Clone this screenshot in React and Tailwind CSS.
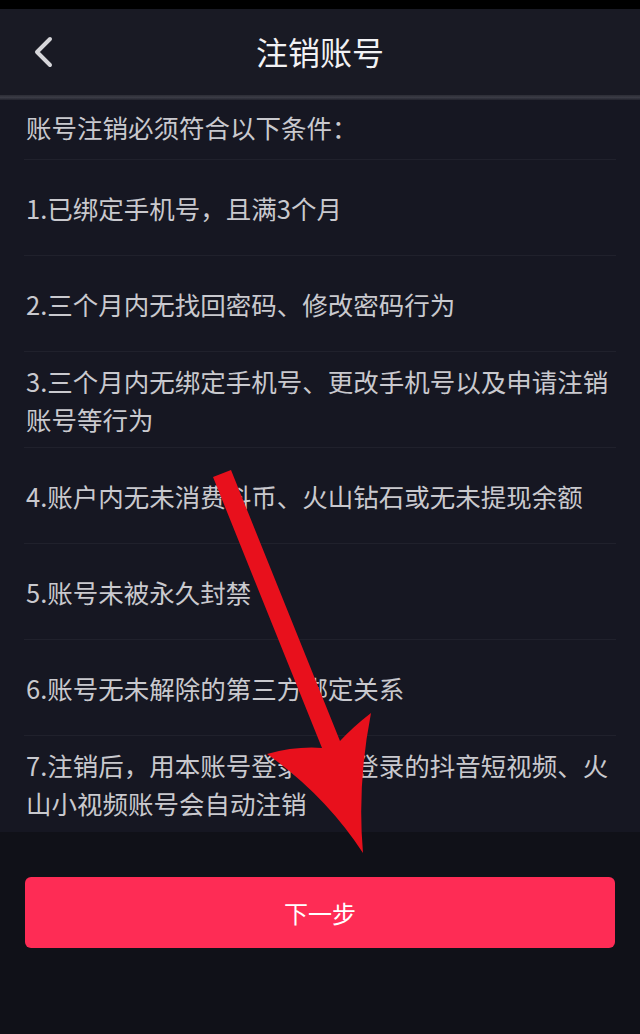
import React from 'react';

const conditions = [
  '1.已绑定手机号，且满3个月',
  '2.三个月内无找回密码、修改密码行为',
  '3.三个月内无绑定手机号、更改手机号以及申请注销账号等行为',
  '4.账户内无未消费抖币、火山钻石或无未提现余额',
  '5.账号未被永久封禁',
  '6.账号无未解除的第三方绑定关系',
  '7.注销后，用本账号登录授权登录的抖音短视频、火山小视频账号会自动注销',
];

const font = { fontFamily: '"Noto Sans CJK SC", "Noto Sans", sans-serif' };

// red annotation arrow drawn over the page
const Arrow = () => (
  <svg
    className="absolute inset-0 w-full h-full pointer-events-none"
    viewBox="0 0 640 1034"
    preserveAspectRatio="none"
  >
    <path
      d="M213,477 L231,470 L340,741 Q354,726 371,713 Q357,785 363,853 Q325,795 267,754 Q296,746 322,748 Z"
      fill="#e8101c"
    />
  </svg>
);

export default function App() {
  return (
    <div className="relative min-h-[1034px] flex flex-col bg-[#161722]" style={font}>
      {/* status bar */}
      <div className="h-[9px] bg-black shrink-0" />

      {/* header */}
      <div className="relative h-[86px] bg-[#191a24] flex items-center justify-center shrink-0">
        <button className="absolute left-[25px] top-0 h-full flex items-center px-2">
          <svg width="22" height="32" viewBox="0 0 22 32" fill="none">
            <polyline
              points="17,3 4,16 17,29"
              stroke="#d6d6da"
              strokeWidth="4"
              strokeLinecap="round"
              strokeLinejoin="round"
            />
          </svg>
        </button>
        <h1 className="text-[32px] text-[#f2f2f4] leading-none -mt-[2px]">注销账号</h1>
      </div>
      <div className="h-[5px] bg-gradient-to-b from-[#2c2d36] via-[#3a3b45] to-[#22232d] shrink-0" />

      {/* conditions */}
      <div className="shrink-0">
        <div className="mx-6 h-[60px] flex items-center pb-[5px] border-b border-[#20212c]">
          <p className="pl-[2px] text-[25.5px] leading-[38px] text-[#c9c9ce]">账号注销必须符合以下条件：</p>
        </div>
        {conditions.map((c, i) => (
          <div
            key={i}
            className={`mx-6 h-[96px] flex items-center ${i < conditions.length - 1 ? 'border-b border-[#20212c]' : ''}`}
          >
            <p className="pl-[2px] pr-[2px] text-[25.5px] leading-[38px] text-[#c9c9ce]">{c}</p>
          </div>
        ))}
      </div>

      {/* footer */}
      <div className="flex-1 bg-[#101118] pt-[45px]">
        <button className="mx-[25px] w-[590px] h-[71px] rounded-md bg-[#fe2c55] flex items-center justify-center">
          <span className="text-[24px] text-white">下一步</span>
        </button>
      </div>

      <Arrow />
    </div>
  );
}
